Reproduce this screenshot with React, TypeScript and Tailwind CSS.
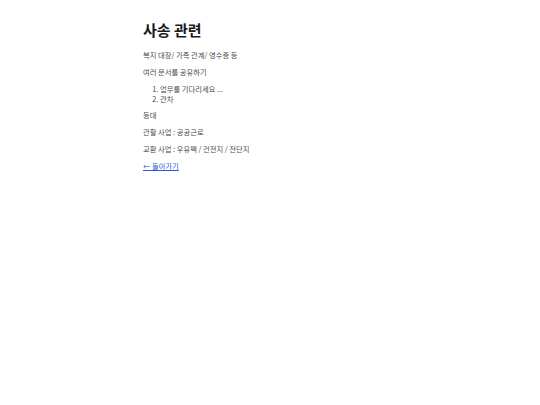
export default function App() {
  return (
    <main
      className="min-h-screen bg-white text-[#4a4a4a]"
      style={{ fontFamily: '"Noto Sans CJK KR", "Noto Sans", sans-serif' }}
    >
      <div className="mx-auto w-[254px] pt-[20px] text-[7.3px] leading-[10px]">
        <h1 className="mb-[10px] text-[15px] font-bold leading-[20px] text-[#1a1a1a]">사송 관련</h1>
        <p className="mb-[6.8px]">복지 대장/ 가족 관계/ 영수증 등</p>
        <p className="mb-[6.8px]">여러 문서를 공유하기</p>
        <ol className="mb-[6.8px] list-decimal pl-[17px]">
          <li>업무를 기다리세요 ...</li>
          <li>관차</li>
        </ol>
        <p className="mb-[6.8px]">등대</p>
        <p className="mb-[6.8px]">관할 사업 : 공공근로</p>
        <p className="mb-[6.8px]">교환 사업 : 우유팩 / 건전지 / 전단지</p>
        <p>
          <a href="#" className="text-[#2a5bd7] underline">
            ← 돌아가기
          </a>
        </p>
      </div>
    </main>
  );
}
